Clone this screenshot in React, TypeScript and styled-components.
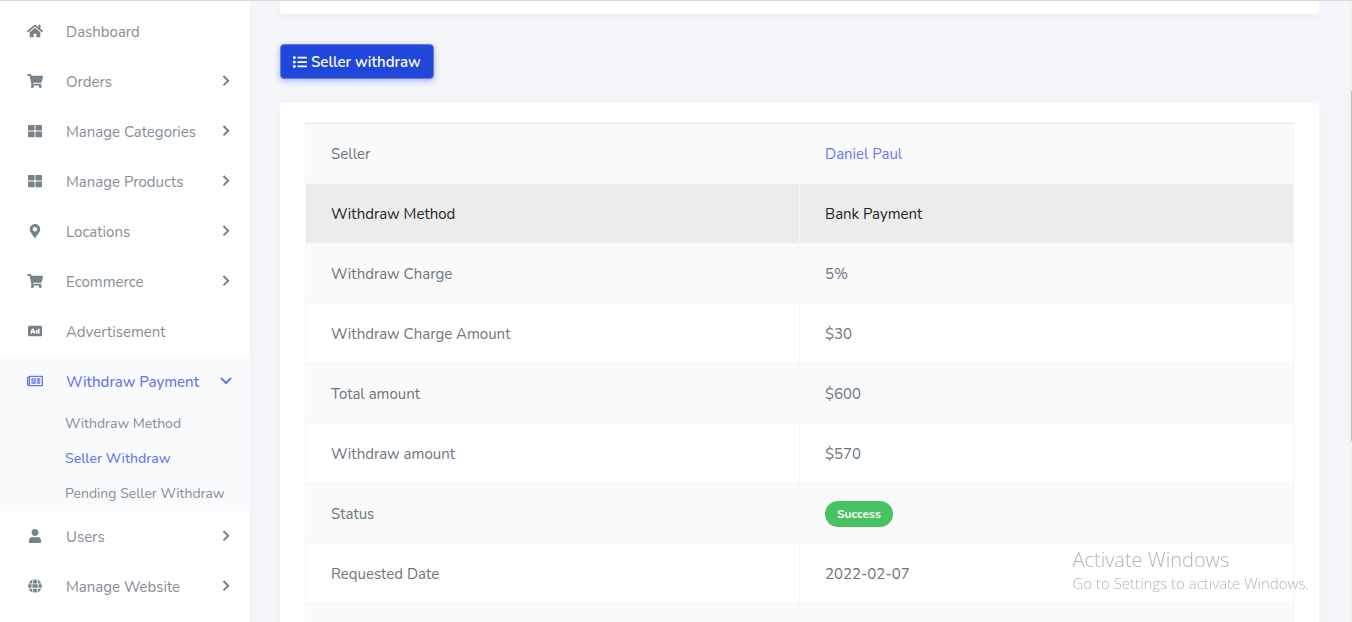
import React from "react";
import styled, { createGlobalStyle, css } from "styled-components";
import {
  FaHome, FaShoppingCart, FaThLarge, FaMapMarkerAlt, FaAd,
  FaRegNewspaper, FaUser, FaGlobe, FaList,
} from "react-icons/fa";
import type { IconType } from "react-icons";

const GlobalStyle = createGlobalStyle`
  *, *::before, *::after { box-sizing: border-box; }
  body {
    margin: 0;
    background: #f4f6f9;
    color: #6c757d;
    font-family: Nunito, Lato, "Open Sans", sans-serif;
    font-size: 15px;
    line-height: 24px;
  }
  a { text-decoration: none; }
`;

const Shell = styled.div`
  display: flex;
  height: 100vh;
  overflow: hidden;
  border-top: 1px solid #d8d9dc;
`;

const Sidebar = styled.nav`
  flex: 0 0 250px;
  padding-top: 5px;
  background: #fff;
  box-shadow: 0 4px 8px rgba(0, 0, 0, 0.03);
`;

const MenuList = styled.ul`
  margin: 0;
  padding: 0;
  list-style: none;
`;

const MenuEntry = styled.li<{ $active?: boolean }>`
  background: ${(p) => (p.$active ? "#f8fafb" : "transparent")};
`;

const MenuLink = styled.a<{ $active?: boolean }>`
  display: flex;
  align-items: center;
  height: 50px;
  padding: 0 18px 0 20px;
  color: ${(p) => (p.$active ? "#6777ef" : "#868e96")};
  font-size: 15px;
  font-weight: ${(p) => (p.$active ? 500 : 400)};
`;

const MenuIcon = styled.span<{ $active?: boolean }>`
  display: flex;
  justify-content: center;
  width: 30px;
  margin-right: 16px;
  color: ${(p) => (p.$active ? "#6777ef" : "#78828a")};
`;

const MenuLabel = styled.span`
  flex: 1;
  padding-top: 2px;
`;

const SubLink = styled.a<{ $active?: boolean }>`
  display: flex;
  align-items: center;
  height: 35px;
  padding-left: 65px;
  color: ${(p) => (p.$active ? "#6777ef" : "#868e96")};
  font-size: 14px;
  font-weight: ${(p) => (p.$active ? 500 : 400)};
`;

const Content = styled.main`
  flex: 1;
  min-width: 0;
  padding: 0 30px;
`;

const card = css`
  background: #fff;
  border-radius: 3px;
  box-shadow: 0 4px 8px rgba(0, 0, 0, 0.03);
`;

const HeaderCard = styled.div`
  ${card}
  height: 13px;
  border-radius: 0 0 3px 3px;
`;

const WithdrawButton = styled.button`
  display: flex;
  align-items: center;
  gap: 4px;
  height: 35px;
  margin: 30px 0 24px;
  padding: 0 12px;
  border: 1px solid #6777ef;
  border-radius: 4px;
  background: #2046da;
  box-shadow: 0 2px 6px #acb5f6;
  color: #fff;
  font-family: inherit;
  font-size: 15px;
  font-weight: 600;
`;

const TableCard = styled.section`
  ${card}
  padding: 20px 25px;
`;

const DetailTable = styled.table`
  width: 100%;
  table-layout: fixed;
  border-collapse: collapse;
`;

const DetailRow = styled.tr<{ $hovered?: boolean }>`
  height: 60px;
  color: ${(p) => (p.$hovered ? "#212529" : "#6c757d")};
  background: ${(p) => (p.$hovered ? "#ececec" : "#fff")};

  &:nth-child(odd) {
    background: #fafafa;
  }

  &:first-child > * {
    border-top-color: #dee2e6;
  }
`;

const cell = css`
  padding: 0 25px;
  border: 1px solid #f6f6f6;
  text-align: left;
  font-weight: 400;
`;

const Term = styled.th`${cell}`;
const Value = styled.td`${cell}`;

const SellerLink = styled.a`
  color: #6777ef;
`;

const Badge = styled.span`
  display: inline-block;
  padding: 0 12px;
  border-radius: 13px;
  background: #47c363;
  color: #fff;
  font-size: 12px;
  font-weight: 700;
  line-height: 26px;
  vertical-align: middle;
`;

const ScrollTrack = styled.div`
  flex: 0 0 3px;
  padding: 90px 0 0 2px;
  background: #f1f1f1;
`;

const ScrollThumb = styled.div`
  height: 66%;
  background: #c1c1c1;
`;

const Watermark = styled.aside`
  position: fixed;
  right: 43px;
  bottom: 29px;
  color: #b4b4b4;
  font-family: "Segoe UI", "Open Sans", sans-serif;
  font-size: 15px;
  font-weight: 300;
  line-height: 20px;
  pointer-events: none;
`;

const WatermarkTitle = styled.div`
  font-size: 20px;
  line-height: 26px;
`;

const Chevron = ({ open }: { open?: boolean }) => (
  <svg width="12" height="12" viewBox="0 0 12 12" fill="none" stroke={open ? "currentColor" : "#78828a"} strokeWidth="2" aria-hidden="true">
    <path d={open ? "M1 3L6 8L11 3" : "M3.5 1L8.2 5.7L3.5 10.4"} />
  </svg>
);

interface Entry {
  label: string;
  icon: IconType;
  iconSize: number;
  expandable?: boolean;
  children?: string[];
}

const entries: Entry[] = [
  { label: "Dashboard", icon: FaHome, iconSize: 16 },
  { label: "Orders", icon: FaShoppingCart, iconSize: 16, expandable: true },
  { label: "Manage Categories", icon: FaThLarge, iconSize: 14, expandable: true },
  { label: "Manage Products", icon: FaThLarge, iconSize: 14, expandable: true },
  { label: "Locations", icon: FaMapMarkerAlt, iconSize: 14, expandable: true },
  { label: "Ecommerce", icon: FaShoppingCart, iconSize: 16, expandable: true },
  { label: "Advertisement", icon: FaAd, iconSize: 14 },
  {
    label: "Withdraw Payment",
    icon: FaRegNewspaper,
    iconSize: 16,
    expandable: true,
    children: ["Withdraw Method", "Seller Withdraw", "Pending Seller Withdraw"],
  },
  { label: "Users", icon: FaUser, iconSize: 14, expandable: true },
  { label: "Manage Website", icon: FaGlobe, iconSize: 14, expandable: true },
];

const details: [string, React.ReactNode][] = [
  ["Seller", <SellerLink href="#seller">Daniel Paul</SellerLink>],
  ["Withdraw Method", "Bank Payment"],
  ["Withdraw Charge", "5%"],
  ["Withdraw Charge Amount", "$30"],
  ["Total amount", "$600"],
  ["Withdraw amount", "$570"],
  ["Status", <Badge>Success</Badge>],
  ["Requested Date", "2022-02-07"],
  ["", ""],
];

export default function App() {
  return (
    <>
      <GlobalStyle />
      <Shell>
        <Sidebar>
          <MenuList>
            {entries.map(({ label, icon: Icon, iconSize, expandable, children }) => {
              const active = Boolean(children);
              return (
                <MenuEntry key={label} $active={active}>
                  <MenuLink href="#" $active={active}>
                    <MenuIcon $active={active}><Icon size={iconSize} /></MenuIcon>
                    <MenuLabel>{label}</MenuLabel>
                    {expandable && <Chevron open={active} />}
                  </MenuLink>
                  {children && (
                    <MenuList>
                      {children.map((name) => (
                        <li key={name}>
                          <SubLink href="#" $active={name === "Seller Withdraw"}>{name}</SubLink>
                        </li>
                      ))}
                    </MenuList>
                  )}
                </MenuEntry>
              );
            })}
          </MenuList>
        </Sidebar>
        <Content>
          <HeaderCard />
          <WithdrawButton type="button"><FaList size={14} />Seller withdraw</WithdrawButton>
          <TableCard>
            <DetailTable>
              <tbody>
                {details.map(([term, value]) => (
                  <DetailRow key={term} $hovered={term === "Withdraw Method"}>
                    <Term scope="row">{term}</Term>
                    <Value>{value}</Value>
                  </DetailRow>
                ))}
              </tbody>
            </DetailTable>
          </TableCard>
        </Content>
        <ScrollTrack><ScrollThumb /></ScrollTrack>
      </Shell>
      <Watermark>
        <WatermarkTitle>Activate Windows</WatermarkTitle>
        Go to Settings to activate Windows.
      </Watermark>
    </>
  );
}
